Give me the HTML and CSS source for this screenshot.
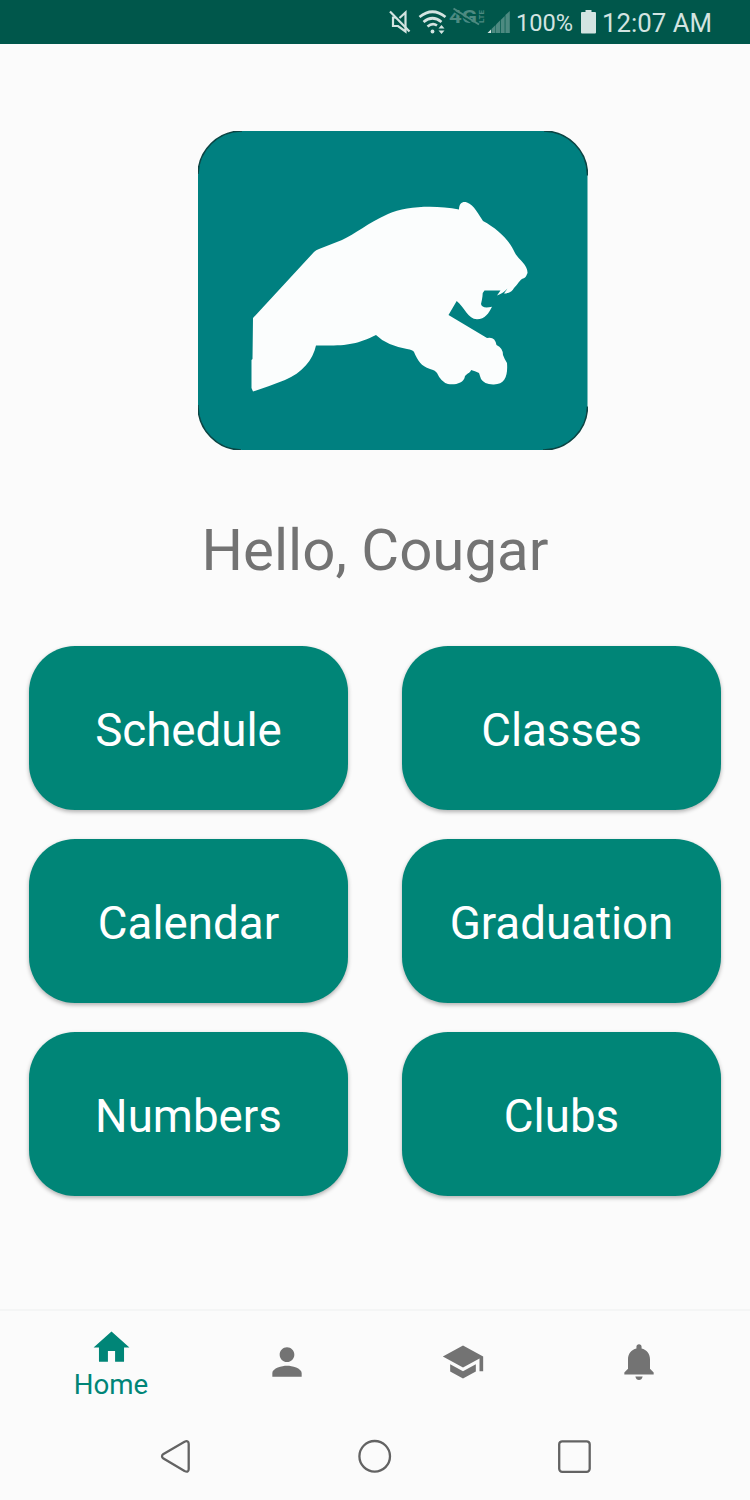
FILE: index.html
```html
<!DOCTYPE html>
<html lang="en">
<head>
  <meta charset="UTF-8" />
  <meta name="viewport" content="width=device-width, initial-scale=1.0" />
  <title>Cougar Home</title>
  <link rel="stylesheet" href="styles.css">
</head>
<body>
  <div class="status-bar">
    <svg class="status-icons" width="122" height="43" viewBox="389 0 122 43">
      <!-- muted -->
      <g fill="none" stroke="#d3e4e1" stroke-width="2.200">
        <path d="M396 17.500H393V26H398L405.500 31.500V12.500L399.500 18" />
        <path d="M390 11.500L409.500 31.500" />
      </g>
      <!-- wifi -->
      <g fill="none" stroke="#d3e4e1" stroke-width="2.700">
        <path d="M419.500 17Q432.500 6.500 445.500 17" />
        <path d="M423.500 22Q432.500 14.500 441.500 22" />
        <path d="M427.500 26.500Q432.500 22.500 437 25.500" />
      </g>
      <circle cx="432.500" cy="31.500" r="1.900" fill="#d3e4e1" />
      <path d="M438.500 28.500L441.500 25L444.500 28.500ZM438.500 30.500L441.500 34L444.500 30.500Z" fill="#d3e4e1" />
      <!-- no mobile data -->
      <text class="net" x="449" y="23" textLength="28" lengthAdjust="spacingAndGlyphs">4G</text>
      <text class="lte" transform="translate(483.500 23) rotate(-90)" textLength="13" lengthAdjust="spacingAndGlyphs">LTE</text>
      <path d="M453 10.500L477 26" stroke="#00574b" stroke-width="1.500" />
      <path d="M453.500 8.500L479 24.500" stroke="#4d8a81" stroke-width="2" />
      <!-- signal -->
      <path d="M487.500 33L491 29.500V33Z" fill="#d3e4e1" />
      <g fill="#4d8a81">
        <path d="M491.500 29L495.500 25V33H491.500Z" />
        <path d="M496 24.500L500 20.500V33H496Z" />
        <path d="M500.700 20L504.700 16V33H500.700Z" />
        <path d="M505.400 15L509.800 11V33H505.400Z" />
      </g>
    </svg>
    <span class="percent">100%</span>
    <svg class="battery" width="15" height="24" viewBox="0 0 15 24">
      <path d="M4.500 0H10.500V2H14Q15 2 15 3V22.500Q15 23.500 14 23.500H1Q0 23.500 0 22.500V3Q0 2 1 2H4.500Z" fill="#d3e4e1" />
    </svg>
    <span class="time">12:07 AM</span>
  </div>

  <main class="content">
    <svg class="logo" width="390" height="319" viewBox="0 0 390 319">
      <rect width="389.500" height="319" rx="44" fill="#008080" />
      <path fill="#fbfdfd" d="M55 187L116 121Q118 119 121 118L144 109C157 103 170 92 190 83C208 75 237 74 261 78.500C261 72 265 70 269 71.500C276 74 281 84 285 90C300 98 312 110 317 122C320 128 330 134 329.500 142C328 146 327 147 324 148C321 150 320 153 316 157C314 161 309 163 306 162.500L309.500 157.500Q305 162.500 299 164.500L302.500 159.500H286.500Q284.500 161 284.500 165Q284 169 283 173Q284 178 294 175.700C291 182 287 188 279 188.300C270 188 267 177 258.700 170L250.500 184L289 207Q297 205 298.500 214Q305 217 305 224Q306 227 309 232C310 245 307 254 295 253.500Q286 253 283 248L281 242Q277 240 273 239C273 241 270 242 267 245C266 253 256 254 250 253Q243 251 239 242Q237 239 232 238C223 235 220 230 216 221Q215 219 209 218Q188 214 178 204C158 214 147 215 118 214.500C115 229 104 242 87 249Q72 255 55 260.500L53.500 257V229L54.500 228Z" />
    </svg>

    <h1>Hello, Cougar</h1>

    <div class="menu">
      <button>Schedule</button>
      <button>Classes</button>
      <button>Calendar</button>
      <button>Graduation</button>
      <button>Numbers</button>
      <button>Clubs</button>
    </div>
  </main>

  <nav class="tabs">
    <a class="tab active">
      <svg viewBox="0 0 24 24"><path d="M10 20v-6h4v6h5v-8h3L12 3 2 12h3v8z" /></svg>
      <span>Home</span>
    </a>
    <a class="tab">
      <svg viewBox="0 0 24 24"><path d="M12 12c2.210 0 4-1.790 4-4s-1.790-4-4-4-4 1.790-4 4 1.790 4 4 4zm0 2c-2.670 0-8 1.340-8 4v2h16v-2c0-2.660-5.330-4-8-4z" /></svg>
    </a>
    <a class="tab">
      <svg viewBox="0 0 24 24"><path d="M5 13.180v4L12 21l7-3.820v-4L12 17l-7-3.820zM12 3L1 9l11 6 9-4.910V17h2V9L12 3z" /></svg>
    </a>
    <a class="tab">
      <svg viewBox="0 0 24 24"><path d="M10 19.900h4c-.3 1.300-1 1.900-2 1.900s-1.700-.6-2-1.900zM18 15.700V10.500c0-3-1.800-5.200-4.600-5.900V3.700c0-.83-.6-1.400-1.400-1.400s-1.400.57-1.400 1.400v.9C7.800 5.300 6 7.500 6 10.500v5.200l-2 2v1.100h16v-1.100l-2-2z" /></svg>
    </a>
  </nav>

  <div class="system-nav">
    <svg viewBox="0 0 36 36"><path d="M5.500 15.900L26.500 3.700Q30.700 2 30.700 6V31Q30.700 35 26.500 33L5.500 20.600Q2.500 18.200 5.500 15.900Z" /></svg>
    <svg viewBox="0 0 36 36"><circle cx="17.700" cy="18.300" r="15.300" /></svg>
    <svg viewBox="0 0 36 36"><rect x="2.200" y="3.300" width="30.500" height="30.500" rx="3" /></svg>
  </div>
</body>
</html>
```

FILE: styles.css
```css
* {
  box-sizing: border-box;
}

body {
  font-family: Roboto, sans-serif;
  background-color: #fbfbfb;
  margin: 0;
  height: 1500px;
  display: flex;
  flex-direction: column;
}

.status-bar {
  height: 43.500px;
  background-color: #00574b;
  color: #d3e4e1;
  display: flex;
  align-items: center;
  padding-left: 389px;
  white-space: nowrap;
}

.percent {
  font-size: 23.600px;
  width: 58px;
  margin-left: 5px;
  padding-top: 2px;
}

.battery {
  margin-left: 7px;
}

.time {
  font-size: 25.800px;
  margin-left: 6px;
  padding-top: 3px;
}

.net,
.lte {
  fill: #4d8a81;
  font-weight: 700;
}

.net {
  font-size: 18px;
}

.lte {
  font-size: 8px;
}

.content {
  flex: 1;
  display: flex;
  flex-direction: column;
  padding: 87.500px 29px 0;
}

.logo {
  margin-left: 169px;
}

/* dark line on the rounded corners only */
.logo rect {
  stroke: #0b4443;
  stroke-width: 1.500;
  stroke-dasharray: 0 302 69 231 69 302 69 231 69 0;
}

h1 {
  margin: 64px 0 0;
  height: 132px;
  line-height: 72px;
  text-align: center;
  font-size: 58.200px;
  font-weight: 400;
  color: #737373;
}

.menu {
  display: grid;
  grid-template-columns: 319px 319px;
  grid-auto-rows: 164px;
  gap: 29px 54px;
}

button {
  border: none;
  border-radius: 46px;
  padding: 4px 0 0;
  background-color: #008577;
  color: white;
  font-family: inherit;
  font-size: 45.700px;
  box-shadow: 0 2px 4px rgba(0, 0, 0, 0.3);
}

.tabs {
  height: 102px;
  border-top: 2px solid #f4f5f5;
  display: flex;
  padding: 0 23px;
}

.tab {
  flex: 1;
  display: flex;
  flex-direction: column;
  align-items: center;
  padding-top: 28.500px;
  color: #737373;
}

.tab svg {
  width: 44px;
  height: 44px;
  fill: currentColor;
}

.tab.active {
  color: #008577;
  padding-top: 14.500px;
}

.tab.active svg {
  width: 43px;
  height: 43px;
}

.tab span {
  font-size: 27.700px;
  line-height: 31px;
}

.system-nav {
  height: 89px;
  display: flex;
  justify-content: center;
  gap: 163.500px;
  padding-top: 27px;
}

.system-nav svg {
  width: 36px;
  height: 36px;
  fill: none;
  stroke: #636363;
  stroke-width: 2.300;
}
```
